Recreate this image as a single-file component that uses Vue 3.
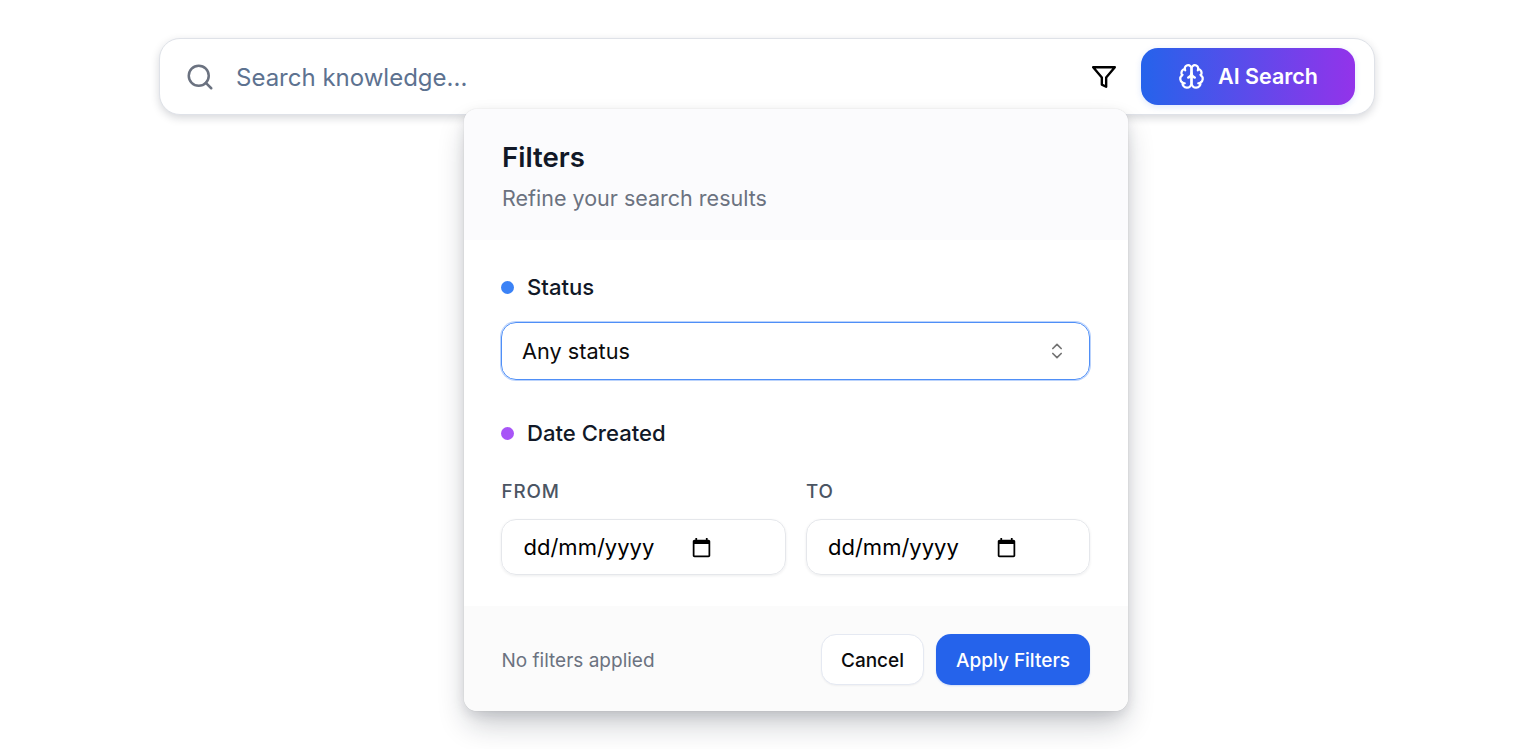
<script setup>
const brainPaths = [
  'M12 5a3 3 0 1 0-5.997.125 4 4 0 0 0-2.526 5.77 4 4 0 0 0 .556 6.588A4 4 0 1 0 12 18Z',
  'M12 5a3 3 0 1 1 5.997.125 4 4 0 0 1 2.526 5.77 4 4 0 0 1-.556 6.588A4 4 0 1 1 12 18Z',
  'M15 13a4.5 4.5 0 0 1-3-4 4.5 4.5 0 0 1-3 4',
  'M17.599 6.5a3 3 0 0 0 .399-1.375',
  'M6.003 5.125A3 3 0 0 0 6.401 6.5',
  'M3.477 10.896a4 4 0 0 1 .585-.396',
  'M19.938 10.5a4 4 0 0 1 .585.396',
  'M6 18a4 4 0 0 1-1.967-.516',
  'M19.967 17.484A4 4 0 0 1 18 18'
]
const dates = ['From', 'To']
</script>

<template>
  <main class="page">
    <div class="search-wrap">
      <div class="search-bar">
        <svg class="search-icon" viewBox="0 0 24 24" fill="none" stroke="currentColor" stroke-width="2" stroke-linecap="round" stroke-linejoin="round">
          <circle cx="11" cy="11" r="8" />
          <path d="m21 21-4.35-4.35" />
        </svg>
        <span class="placeholder">Search knowledge...</span>
        <button class="filter-btn" type="button" aria-label="Filters">
          <svg viewBox="0 0 24 24" fill="none" stroke="currentColor" stroke-width="2.2" stroke-linecap="round" stroke-linejoin="round">
            <polygon points="22 3 2 3 10 12.46 10 19 14 21 14 12.46 22 3" />
          </svg>
        </button>
        <button class="ai-btn" type="button">
          <svg viewBox="0 0 24 24" fill="none" stroke="currentColor" stroke-width="2" stroke-linecap="round" stroke-linejoin="round">
            <path v-for="d in brainPaths" :key="d" :d="d" />
          </svg>
          <span>AI Search</span>
        </button>
      </div>

      <section class="popover">
        <header class="pop-head">
          <h2>Filters</h2>
          <p>Refine your search results</p>
        </header>

        <div class="pop-body">
          <div class="group-label"><i class="dot blue"></i>Status</div>
          <div class="select">
            <span>Any status</span>
            <svg viewBox="0 0 24 24" fill="none" stroke="currentColor" stroke-width="2" stroke-linecap="round" stroke-linejoin="round">
              <path d="m7 15 5 5 5-5" />
              <path d="m7 9 5-5 5 5" />
            </svg>
          </div>

          <div class="group-label date-label"><i class="dot purple"></i>Date Created</div>
          <div class="date-grid">
            <div v-for="d in dates" :key="d" class="date-col">
              <div class="mini-label">{{ d }}</div>
              <div class="date-input">
                <span>dd/mm/yyyy</span>
                <svg viewBox="0 0 24 24" fill="currentColor">
                  <path d="M20 3h-1V1h-2v2H7V1H5v2H4c-1.100 0-2 .9-2 2v16c0 1.100.9 2 2 2h16c1.100 0 2-.9 2-2V5c0-1.100-.9-2-2-2zm0 18H4V8h16v13z" />
                </svg>
              </div>
            </div>
          </div>
        </div>

        <footer class="pop-foot">
          <span class="note">No filters applied</span>
          <div class="actions">
            <button class="cancel" type="button">Cancel</button>
            <button class="apply" type="button">Apply Filters</button>
          </div>
        </footer>
      </section>
    </div>
  </main>
</template>

<style>
html, body { margin: 0; background: #fff; }
</style>

<style scoped>
.page {
  box-sizing: border-box;
  height: 749px;
  padding: 38px 145px 0 159px;
  overflow: hidden;
  font-family: Inter, "Liberation Sans", sans-serif;
  background: #fff;
}
.search-wrap { position: relative; }
.search-bar {
  box-sizing: border-box;
  height: 77px;
  display: flex;
  align-items: center;
  padding: 0 19px 0 25px;
  background: #fff;
  border: 1px solid #dfe2e8;
  border-radius: 21px;
  box-shadow: 0 3px 9px rgba(15, 23, 42, 0.17);
}
.search-icon { width: 30px; height: 30px; color: #6b7280; flex: none; }
.placeholder { margin-left: 21px; padding-top: 1px; flex: 1; font-size: 24px; color: #5d7290; }
button { font-family: inherit; border: 0; padding: 0; cursor: pointer; }
.filter-btn {
  width: 26px; height: 26px; margin-right: 24px;
  background: none; color: #000;
  display: flex; align-items: center; justify-content: center;
}
.filter-btn svg { width: 26px; height: 26px; }
.ai-btn {
  width: 214px; height: 57px;
  padding-bottom: 1px;
  display: flex; align-items: center; justify-content: center; gap: 13px;
  color: #fff; font-size: 21.5px; font-weight: 600;
  border-radius: 17px;
  background: linear-gradient(90deg, #2563eb, #9333ea);
  box-shadow: 0 2px 6px rgba(37, 99, 235, 0.15);
}
.ai-btn svg { width: 27px; height: 27px; }
.popover {
  position: absolute;
  left: 305px;
  top: 71px;
  width: 664px;
  height: 602px;
  display: flex;
  flex-direction: column;
  border-radius: 13px;
  background: #fff;
  overflow: hidden;
  box-shadow: 0 0 1px rgba(15, 23, 42, 0.22), 0 16px 30px -4px rgba(15, 23, 42, 0.24), 0 4px 12px rgba(15, 23, 42, 0.1);
}
.pop-head {
  box-sizing: border-box;
  height: 131px;
  padding: 29px 38px 0;
  background: #fbfbfd;
}
.pop-head h2 { margin: 0; font-size: 27.6px; line-height: 38px; font-weight: 600; color: #111827; }
.pop-head p { margin: 6px 0 0; font-size: 21.5px; line-height: 32px; color: #6b7280; }
.pop-body { flex: 1; padding: 32px 38px 0 37px; }
.group-label {
  display: flex; align-items: center; gap: 13px;
  font-size: 22.1px; line-height: 30px; font-weight: 500; color: #111827;
}
.dot { width: 13px; height: 13px; border-radius: 50%; flex: none; }
.blue { background: #3b82f6; }
.purple { background: #a855f7; }
.select {
  box-sizing: border-box;
  height: 58px; margin-top: 20px;
  display: flex; align-items: center; justify-content: space-between;
  padding: 0 22px 0 20px;
  border: 1px solid #4f8ff7;
  border-radius: 15px;
  font-size: 21.7px; color: #0b0b0c;
  box-shadow: 0 0 0 1px rgba(59, 130, 246, 0.35);
}
.select svg { width: 20px; height: 20px; color: #737373; }
.date-label { margin-top: 38px; }
.date-grid { display: grid; grid-template-columns: 1fr 1fr; gap: 20px; margin-top: 31px; }
.mini-label {
  padding-left: 0.5px;
  font-size: 18.8px; line-height: 26px; font-weight: 500; letter-spacing: 0.9px;
  text-transform: uppercase; color: #4b5563;
}
.date-input {
  box-sizing: border-box;
  height: 56px; margin-top: 14px;
  display: flex; align-items: center; gap: 37px;
  padding: 0 21.5px;
  border: 1px solid #e5e7eb;
  border-radius: 15px;
  font-size: 22px; color: #000;
  box-shadow: 0 1px 3px rgba(15, 23, 42, 0.08);
}
.date-input svg { width: 21px; height: 21px; flex: none; }
.pop-foot {
  box-sizing: border-box;
  height: 105px;
  display: flex; align-items: center; justify-content: space-between;
  padding: 1px 38px 0 37.5px;
  background: #fbfbfb;
}
.note { padding-top: 2px; font-size: 19px; color: #6b7280; }
.actions { display: flex; gap: 12px; }
.cancel, .apply {
  height: 51px; padding-top: 2px; border-radius: 15px;
  font-size: 19px; font-weight: 500;
}
.cancel {
  box-sizing: border-box; width: 103px;
  background: #fff; color: #0b0b0c;
  border: 1px solid #e5e9f2;
  box-shadow: 0 1px 2px rgba(15, 23, 42, 0.05);
}
.apply {
  width: 154px; background: #2563eb; color: #fff;
  box-shadow: 0 1px 2px rgba(37, 99, 235, 0.2);
}
</style>
